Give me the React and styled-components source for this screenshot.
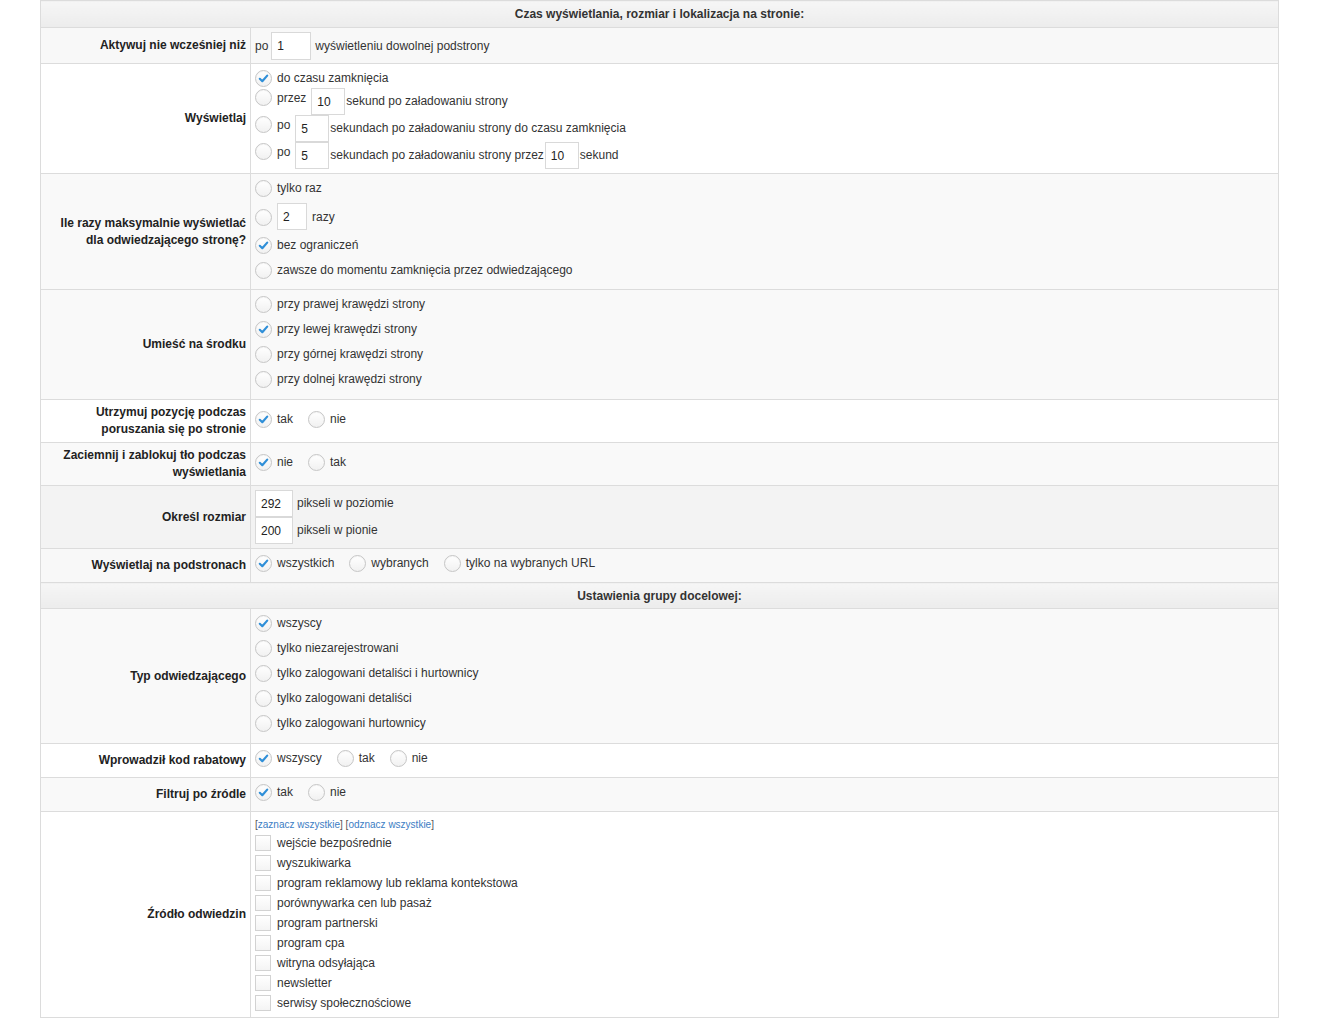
import styled, { createGlobalStyle } from "styled-components";

const GlobalStyle = createGlobalStyle`
  body {
    margin: 0;
    background: #fff;
    font-family: "Liberation Sans", Arial, sans-serif;
    font-size: 12px;
    color: #333;
  }
`;

const Check = () => (
  <svg width="11" height="11" viewBox="0 0 11 11">
    <path
      d="M1.8 5.8 L4.3 8.2 L9.2 2.6"
      fill="none"
      stroke="#2f8fd8"
      strokeWidth="2.2"
      strokeLinecap="round"
      strokeLinejoin="round"
    />
  </svg>
);

const Radio = ({ checked }) => (
  <RadioDot>{checked && <Check />}</RadioDot>
);

const Choice = ({ checked, children, $top, $mb, $inline }) => (
  <ChoiceRow $top={$top} $mb={$mb} $inline={$inline}>
    <Radio checked={checked} />
    {children}
  </ChoiceRow>
);

const Field = ({ value, w, h, ml = 0, mr = 0 }) => (
  <Input readOnly value={value} $w={w} $h={h} style={{ marginLeft: ml, marginRight: mr }} />
);

const Section = ({ title, h }) => (
  <tr>
    <Header colSpan={2} $h={h}>
      {title}
    </Header>
  </tr>
);

const sources = [
  "wejście bezpośrednie",
  "wyszukiwarka",
  "program reklamowy lub reklama kontekstowa",
  "porównywarka cen lub pasaż",
  "program partnerski",
  "program cpa",
  "witryna odsyłająca",
  "newsletter",
  "serwisy społecznościowe",
];

const visitorTypes = [
  "wszyscy",
  "tylko niezarejestrowani",
  "tylko zalogowani detaliści i hurtownicy",
  "tylko zalogowani detaliści",
  "tylko zalogowani hurtownicy",
];

const App = () => {
  return (
    <Wrapper>
      <GlobalStyle />
      <Table>
        <tbody>
          <Section title="Czas wyświetlania, rozmiar i lokalizacja na stronie:" h={27} />

          <Row $bg="#f8f8f8">
            <Label>Aktywuj nie wcześniej niż</Label>
            <Cell $pad="4px 5px 3px 4px">
              <Line>
                <Text>po</Text>
                <Field value="1" w={40} h={28} ml={3} mr={4} />
                <Text>wyświetleniu dowolnej podstrony</Text>
              </Line>
            </Cell>
          </Row>

          <Row $bg="#fff">
            <Label>Wyświetlaj</Label>
            <Cell>
              <Stack>
                <Choice checked>
                  <Text>do czasu zamknięcia</Text>
                </Choice>
                <Choice $top>
                  <Text>przez</Text>
                  <Field value="10" w={34} ml={5} />
                  <Text $lh={27} $ml={1}>sekund po załadowaniu strony</Text>
                </Choice>
                <Choice $top>
                  <Text>po</Text>
                  <Field value="5" w={34} ml={5} />
                  <Text $lh={27} $ml={1}>
                    sekundach po załadowaniu strony do czasu zamknięcia
                  </Text>
                </Choice>
                <Choice $top>
                  <Text>po</Text>
                  <Field value="5" w={34} ml={5} />
                  <Text $lh={27} $ml={1}>
                    sekundach po załadowaniu strony przez
                  </Text>
                  <Field value="10" w={34} ml={1} />
                  <Text $lh={27} $ml={1}>sekund</Text>
                </Choice>
              </Stack>
            </Cell>
          </Row>

          <Row $bg="#f9f9f9">
            <Label>
              Ile razy maksymalnie wyświetlać
              <br />
              dla odwiedzającego stronę?
            </Label>
            <Cell>
              <Stack>
                <Choice $mb={5}>
                  <Text>tylko raz</Text>
                </Choice>
                <Choice $mb={5}>
                  <Field value="2" w={30} mr={5} />
                  <Text>razy</Text>
                </Choice>
                <Choice checked $mb={5}>
                  <Text>bez ograniczeń</Text>
                </Choice>
                <Choice $mb={5}>
                  <Text>zawsze do momentu zamknięcia przez odwiedzającego</Text>
                </Choice>
              </Stack>
            </Cell>
          </Row>

          <Row $bg="#f9f9f9">
            <Label>Umieść na środku</Label>
            <Cell $pad="4px 5px 5px 4px">
              <Stack>
                <Choice $mb={5}>
                  <Text>przy prawej krawędzi strony</Text>
                </Choice>
                <Choice checked $mb={5}>
                  <Text>przy lewej krawędzi strony</Text>
                </Choice>
                <Choice $mb={5}>
                  <Text>przy górnej krawędzi strony</Text>
                </Choice>
                <Choice $mb={5}>
                  <Text>przy dolnej krawędzi strony</Text>
                </Choice>
              </Stack>
            </Cell>
          </Row>

          <Row $bg="#fff">
            <Label>
              Utrzymuj pozycję podczas
              <br />
              poruszania się po stronie
            </Label>
            <Cell>
              <Line>
                <Choice checked $inline $mb={5}>
                  <Text>tak</Text>
                </Choice>
                <Choice $inline $mb={5}>
                  <Text>nie</Text>
                </Choice>
              </Line>
            </Cell>
          </Row>

          <Row $bg="#f9f9f9">
            <Label>
              Zaciemnij i zablokuj tło podczas
              <br />
              wyświetlania
            </Label>
            <Cell>
              <Line>
                <Choice checked $inline $mb={5}>
                  <Text>nie</Text>
                </Choice>
                <Choice $inline $mb={5}>
                  <Text>tak</Text>
                </Choice>
              </Line>
            </Cell>
          </Row>

          <Row $bg="#f3f3f3">
            <Label>Określ rozmiar</Label>
            <Cell>
              <Stack>
                <Line>
                  <Field value="292" w={38} mr={4} />
                  <Text $lh={27}>pikseli w poziomie</Text>
                </Line>
                <Line>
                  <Field value="200" w={38} mr={4} />
                  <Text $lh={27}>pikseli w pionie</Text>
                </Line>
              </Stack>
            </Cell>
          </Row>

          <Row $bg="#f8f8f8">
            <Label>Wyświetlaj na podstronach</Label>
            <Cell>
              <Line>
                <Choice checked $inline $mb={5}>
                  <Text>wszystkich</Text>
                </Choice>
                <Choice $inline $mb={5}>
                  <Text>wybranych</Text>
                </Choice>
                <Choice $inline $mb={5}>
                  <Text>tylko na wybranych URL</Text>
                </Choice>
              </Line>
            </Cell>
          </Row>

          <Section title="Ustawienia grupy docelowej:" h={26} />

          <Row $bg="#f9f9f9">
            <Label>Typ odwiedzającego</Label>
            <Cell $pad="4px 5px 5px 4px">
              <Stack>
                {visitorTypes.map((t, i) => (
                  <Choice key={t} checked={i === 0} $mb={5}>
                    <Text>{t}</Text>
                  </Choice>
                ))}
              </Stack>
            </Cell>
          </Row>

          <Row $bg="#fff">
            <Label>Wprowadził kod rabatowy</Label>
            <Cell>
              <Line>
                <Choice checked $inline $mb={5}>
                  <Text>wszyscy</Text>
                </Choice>
                <Choice $inline $mb={5}>
                  <Text>tak</Text>
                </Choice>
                <Choice $inline $mb={5}>
                  <Text>nie</Text>
                </Choice>
              </Line>
            </Cell>
          </Row>

          <Row $bg="#f9f9f9">
            <Label>Filtruj po źródle</Label>
            <Cell>
              <Line>
                <Choice checked $inline $mb={5}>
                  <Text>tak</Text>
                </Choice>
                <Choice $inline $mb={5}>
                  <Text>nie</Text>
                </Choice>
              </Line>
            </Cell>
          </Row>

          <Row $bg="#fff">
            <Label>Źródło odwiedzin</Label>
            <Cell>
              <Stack>
                <LinkBar>
                  [<LinkText href="#">zaznacz wszystkie</LinkText>] [
                  <LinkText href="#">odznacz wszystkie</LinkText>]
                </LinkBar>
                {sources.map((s) => (
                  <BoxRow key={s}>
                    <Box />
                    <Text>{s}</Text>
                  </BoxRow>
                ))}
              </Stack>
            </Cell>
          </Row>
        </tbody>
      </Table>
    </Wrapper>
  );
};

export default App;

const Wrapper = styled.div`
  padding-left: 40px;
`;

const Table = styled.table`
  width: 1239px;
  border-collapse: collapse;
  border: 1px solid #dcdcdc;
`;

const Header = styled.th`
  height: ${(p) => p.$h}px;
  padding: 0 5px;
  box-sizing: border-box;
  font-size: 12px;
  font-weight: bold;
  color: #333;
  text-align: center;
  background: linear-gradient(#f6f6f6, #ececec);
  border-bottom: 1px solid #dcdcdc;
`;

const Row = styled.tr`
  background: ${(p) => p.$bg};
  border-bottom: 1px solid #dcdcdc;
`;

const Label = styled.th`
  width: 200px;
  padding: 4px 4px 4px 5px;
  text-align: right;
  vertical-align: middle;
  font-weight: bold;
  font-size: 12px;
  line-height: 17px;
  color: #222;
  border-right: 1px solid #dcdcdc;
`;

const Cell = styled.td`
  padding: ${(p) => p.$pad || "4px 5px 4px 4px"};
  vertical-align: middle;
  text-align: left;
`;

const Stack = styled.div`
  display: flex;
  flex-direction: column;
  align-items: flex-start;
`;

const Line = styled.div`
  display: flex;
  align-items: center;
`;

const ChoiceRow = styled.label`
  display: flex;
  align-items: ${(p) => (p.$top ? "flex-start" : "center")};
  margin-bottom: ${(p) => p.$mb || 0}px;
  margin-right: ${(p) => (p.$inline ? 15 : 0)}px;
  cursor: pointer;
`;

const RadioDot = styled.span`
  flex: none;
  width: 17px;
  height: 17px;
  margin: 1px 5px 0 0;
  box-sizing: border-box;
  border-radius: 50%;
  border: 1px solid #c6c6c6;
  background: linear-gradient(#ffffff, #f1f1f1);
  box-shadow: inset 0 1px 1px rgba(0, 0, 0, 0.04);
  display: flex;
  align-items: center;
  justify-content: center;
`;

const Text = styled.span`
  line-height: ${(p) => p.$lh || 20}px;
  margin-left: ${(p) => p.$ml || 0}px;
  white-space: nowrap;
  color: #333;
`;

const Input = styled.input`
  width: ${(p) => p.$w}px;
  height: ${(p) => p.$h || 27}px;
  box-sizing: border-box;
  padding: 0 5px;
  border: 1px solid #d9d9d9;
  background: #fff;
  font-family: inherit;
  font-size: 12px;
  color: #222;
  outline: none;
  flex: none;
`;

const LinkBar = styled.div`
  font-size: 10px;
  line-height: 17px;
  color: #555;
`;

const LinkText = styled.a`
  color: #3b7dc4;
  text-decoration: none;
`;

const BoxRow = styled.label`
  display: flex;
  align-items: center;
  height: 20px;
`;

const Box = styled.span`
  width: 16px;
  height: 16px;
  box-sizing: border-box;
  margin-right: 6px;
  border: 1px solid #d2d2d2;
  background: linear-gradient(#ffffff, #f4f4f4);
  flex: none;
`;
